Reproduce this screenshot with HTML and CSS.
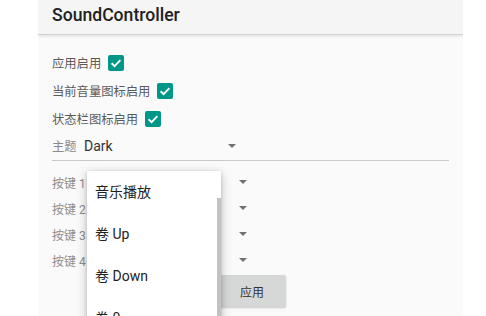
FILE: index.html
```html
<!DOCTYPE html>
<html lang="zh">
<head>
<meta charset="utf-8">
<title>SoundController</title>
<link rel="stylesheet" href="styles.css">
</head>
<body>
<div class="app">
  <header class="header">SoundController</header>
  <main class="content">
    <div class="check-row"><span class="label">应用启用</span><span class="checkbox"><svg viewBox="0 0 16 16" width="16" height="16"><path d="M3.6 8.2 L6.6 11.1 L12.4 5.2" fill="none" stroke="#fff" stroke-width="1.9"/></svg></span></div>
    <div class="check-row"><span class="label">当前音量图标启用</span><span class="checkbox"><svg viewBox="0 0 16 16" width="16" height="16"><path d="M3.6 8.2 L6.6 11.1 L12.4 5.2" fill="none" stroke="#fff" stroke-width="1.9"/></svg></span></div>
    <div class="check-row"><span class="label">状态栏图标启用</span><span class="checkbox"><svg viewBox="0 0 16 16" width="16" height="16"><path d="M3.6 8.2 L6.6 11.1 L12.4 5.2" fill="none" stroke="#fff" stroke-width="1.9"/></svg></span></div>
    <div class="theme-row">
      <span class="theme-label">主题</span>
      <span class="theme-spinner"><span class="theme-value">Dark</span><span class="arrow"></span></span>
    </div>
    <div class="keys">
      <div class="key-row"><span class="key-label">按键 1</span><span class="key-spinner"><span class="arrow"></span></span></div>
      <div class="key-row"><span class="key-label">按键 2</span><span class="key-spinner"><span class="arrow"></span></span></div>
      <div class="key-row"><span class="key-label">按键 3</span><span class="key-spinner"><span class="arrow"></span></span></div>
      <div class="key-row"><span class="key-label">按键 4</span><span class="key-spinner"><span class="arrow"></span></span></div>
    </div>
    <div class="actions"><button class="apply">应用</button></div>
  </main>
  <div class="popup">
    <div class="item">音乐播放</div>
    <div class="item">卷 Up</div>
    <div class="item">卷 Down</div>
    <div class="item">卷 0</div>
    <div class="scrollbar"></div>
  </div>
</div>
</body>
</html>
```

FILE: styles.css
```css
* { box-sizing: border-box; }
html, body { margin: 0; padding: 0; background: #ffffff; }
body {
  font-family: Roboto, "Noto Sans CJK SC", sans-serif;
  height: 316px;
  overflow: hidden;
}
.app {
  position: relative;
  margin-left: 38px;
  width: 425px;
  height: 316px;
  background: #fafafa;
  overflow: hidden;
}
.header {
  position: relative;
  z-index: 1;
  height: 35px;
  padding-left: 14px;
  padding-bottom: 4px;
  line-height: 30px;
  font-size: 17.6px;
  font-weight: 500;
  color: #212121;
  background: #f5f5f5;
  border-bottom: 1px solid #d2d2d2;
  box-shadow: 0 1px 3px rgba(0,0,0,0.12);
}
.content {
  padding: 14px 14px 0 14px;
}
.check-row {
  height: 28px;
  display: flex;
  align-items: center;
  gap: 7px;
}
.label {
  font-size: 12.3px;
  color: #5a5a5a;
}
.checkbox {
  width: 16px;
  height: 16px;
  border-radius: 2px;
  background: #009688;
  display: flex;
}
.theme-row {
  height: 28px;
  display: flex;
  align-items: center;
  border-bottom: 1px solid #c9c9c9;
  padding-bottom: 2px;
}
.theme-label {
  width: 32px;
  font-size: 12.3px;
  color: #8a8a8a;
}
.theme-spinner {
  width: 152px;
  display: flex;
  align-items: center;
}
.theme-value {
  font-size: 14px;
  color: #333;
}
.arrow {
  margin-left: auto;
  width: 0;
  height: 0;
  border-left: 4px solid transparent;
  border-right: 4px solid transparent;
  border-top: 4px solid #707070;
}
.keys {
  margin-top: 8px;
}
.key-row {
  height: 26px;
  display: flex;
  align-items: center;
}
.key-label {
  width: 36px;
  font-size: 12px;
  color: #8c8c8c;
  white-space: nowrap;
}
.key-spinner {
  width: 159px;
  display: flex;
  align-items: center;
}
.actions {
  margin-top: 2px;
  padding-left: 146px;
}
.apply {
  width: 88px;
  height: 32px;
  border: none;
  border-radius: 2px;
  background: #d6d7d7;
  color: #333;
  font-family: Roboto, "Noto Sans CJK SC", sans-serif;
  font-size: 12px;
  padding: 0 0 0 20px;
  text-align: center;
  box-shadow: 0 1px 2px rgba(0,0,0,0.2);
}
.popup {
  position: absolute;
  left: 49px;
  top: 171px;
  width: 134px;
  height: 170px;
  background: #ffffff;
  box-shadow: 0 3px 10px rgba(0,0,0,0.25), 0 1px 3px rgba(0,0,0,0.15);
}
.item {
  height: 42px;
  line-height: 42px;
  padding-left: 8px;
  font-size: 14px;
  color: #222;
}
.scrollbar {
  position: absolute;
  right: 0;
  top: 27px;
  bottom: 0;
  width: 4px;
  background: #c2c2c2;
}
```
